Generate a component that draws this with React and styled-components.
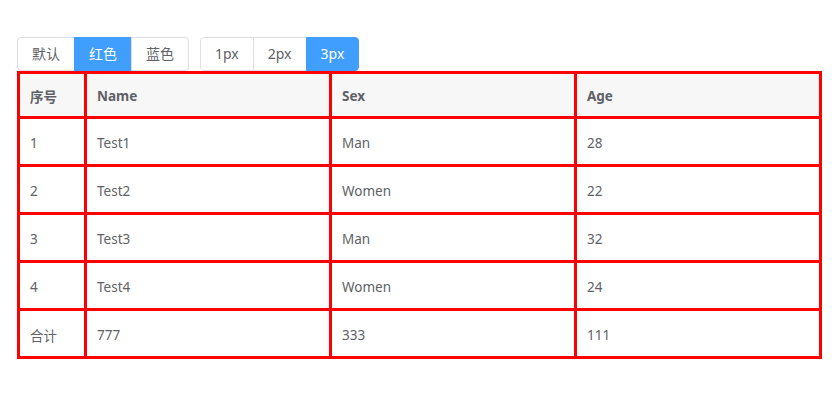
import React, { useState } from 'react'
import styled, { createGlobalStyle } from 'styled-components'

const GlobalStyle = createGlobalStyle`
  html, body {
    margin: 0;
    background: #fff;
  }
  body {
    font-family: 'Noto Sans', 'Noto Sans CJK SC', sans-serif;
    color: #606266;
  }
`

const colors = [
  { label: '默认', value: '#ebeef5' },
  { label: '红色', value: '#ff0000' },
  { label: '蓝色', value: '#409eff' },
]

const widths = [1, 2, 3]

const rows = [
  { id: '1', name: 'Test1', sex: 'Man', age: '28' },
  { id: '2', name: 'Test2', sex: 'Women', age: '22' },
  { id: '3', name: 'Test3', sex: 'Man', age: '32' },
  { id: '4', name: 'Test4', sex: 'Women', age: '24' },
  { id: '合计', name: '777', sex: '333', age: '111' },
]

const App = () => {
  const [color, setColor] = useState(colors[1].value)
  const [width, setWidth] = useState(3)

  return (
    <Page>
      <GlobalStyle />
      <Toolbar>
        <Group>
          {colors.map(c => (
            <SegButton
              key={c.label}
              $active={c.value === color}
              onClick={() => setColor(c.value)}
            >
              {c.label}
            </SegButton>
          ))}
        </Group>
        <Group>
          {widths.map(w => (
            <SegButton key={w} $active={w === width} onClick={() => setWidth(w)}>
              {w}px
            </SegButton>
          ))}
        </Group>
      </Toolbar>
      <Table $line={color} $size={width}>
        <colgroup>
          <col style={{ width: 64 }} />
          <col style={{ width: 242 }} />
          <col style={{ width: 242 }} />
          <col style={{ width: 242 }} />
        </colgroup>
        <thead>
          <tr>
            <Th>序号</Th>
            <Th>Name</Th>
            <Th>Sex</Th>
            <Th>Age</Th>
          </tr>
        </thead>
        <tbody>
          {rows.map(row => (
            <tr key={row.id}>
              <Td>{row.id}</Td>
              <Td>{row.name}</Td>
              <Td>{row.sex}</Td>
              <Td>{row.age}</Td>
            </tr>
          ))}
        </tbody>
      </Table>
    </Page>
  )
}

const Page = styled.div`
  padding: 37px 0 0 17px;
`

const Toolbar = styled.div`
  display: flex;
  gap: 11px;
  height: 34px;
`

const Group = styled.div`
  display: flex;
`

const SegButton = styled.button`
  height: 34px;
  padding: 0 14px;
  font-family: inherit;
  font-size: 14px;
  line-height: 1;
  cursor: pointer;
  border: 1px solid ${p => (p.$active ? '#409eff' : '#dcdfe6')};
  margin-left: -1px;
  background: ${p => (p.$active ? '#409eff' : '#fff')};
  color: ${p => (p.$active ? '#fff' : '#606266')};
  &:first-child {
    margin-left: 0;
    border-radius: 4px 0 0 4px;
  }
  &:last-child {
    border-radius: 0 4px 4px 0;
  }
`

const Table = styled.table`
  table-layout: fixed;
  border-collapse: separate;
  border-spacing: ${p => p.$size}px;
  background: ${p => p.$line};
  width: ${p => 790 + p.$size * 5}px;
  font-size: 13.5px;
`

const Th = styled.th`
  box-sizing: border-box;
  height: 42px;
  padding: 1px 10px 0;
  background: #f7f7f7;
  text-align: left;
  font-weight: 700;
  color: #5f6066;
`

const Td = styled.td`
  box-sizing: border-box;
  height: 45px;
  padding: 2px 10px 0;
  background: #fff;
  color: #606266;
`

export default App
